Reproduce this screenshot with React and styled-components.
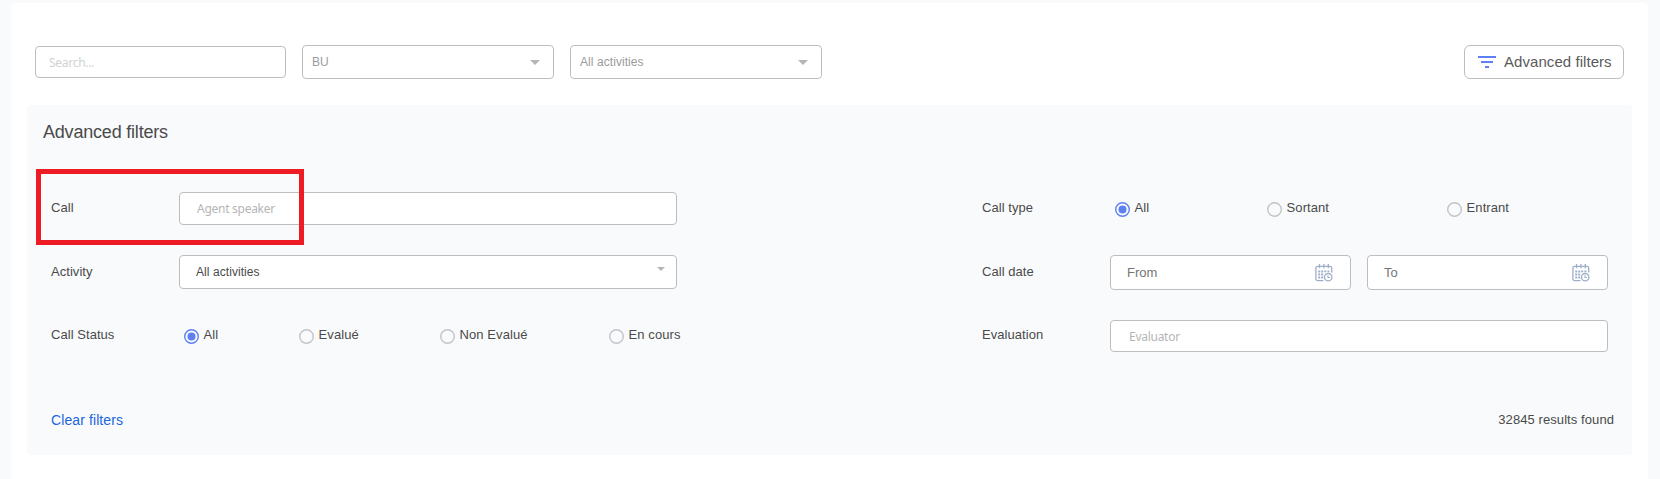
import React from "react";
import styled, { createGlobalStyle, css } from "styled-components";

const GlobalStyle = createGlobalStyle`
  * { box-sizing: border-box; }
  body {
    margin: 0;
    background: #f9fafc;
    font-family: "Liberation Sans", Arial, sans-serif;
    color: #4a4a4a;
    overflow: hidden;
  }
`;

const Page = styled.main`
  height: 479px;
  padding: 3px 12px 0 11px;
`;

const Card = styled.section`
  height: 476px;
  padding: 42px 16px 0;
  background: #fff;
  border-radius: 4px 4px 0 0;
`;

const Toolbar = styled.div`
  display: flex;
  align-items: center;
  gap: 16px;
  height: 34px;
  padding: 0 8px;
`;

const outlined = css`
  background: #fff;
  border: 1px solid #bdbdbd;
  border-radius: 4px;
`;

const TextInput = styled.input`
  ${outlined}
  width: ${(p) => p.$width}px;
  height: ${(p) => p.$height}px;
  margin: ${(p) => p.$offset || 0}px 0 0;
  padding: 0 17px 0 ${(p) => p.$inset}px;
  font: 12px "Noto Sans", "Open Sans", sans-serif;
  letter-spacing: -0.27px;
  outline: none;
  &::placeholder {
    color: ${(p) => p.$tone};
    opacity: 1;
  }
`;

const SelectBox = styled.div`
  ${outlined}
  display: flex;
  align-items: center;
  justify-content: space-between;
  width: ${(p) => p.$width}px;
  height: 34px;
  padding: 0 ${(p) => p.$right}px 0 ${(p) => p.$left}px;
  font-size: 12px;
  letter-spacing: 0.07px;
  color: ${(p) => p.$tone};
`;

const SelectText = styled.span`
  line-height: 16px;
  margin-top: -1px;
`;

const Arrow = styled.span`
  border-style: solid;
  border-color: #b5b5b5 transparent transparent;
  border-width: ${(p) => (p.$small ? "4px 4px 0" : "5px 5px 0")};
  margin-top: ${(p) => (p.$small ? "-6px" : "1px")};
`;

const FilterButton = styled.button`
  ${outlined}
  display: flex;
  align-items: center;
  gap: 9px;
  width: 160px;
  height: 34px;
  margin-left: auto;
  padding: 0 0 0 13px;
  border-radius: 6px;
  font: 15px "Liberation Sans", Arial, sans-serif;
  letter-spacing: 0.06px;
  color: #5a5a5a;
  white-space: nowrap;
`;

const ButtonText = styled.span`
  margin: -1px 0 0 -1px;
`;

const Panel = styled.section`
  height: 350px;
  margin-top: 26px;
  padding: 16px 0 0;
  background: #f9fafc;
  border-radius: 4px;
`;

const Title = styled.h2`
  height: 22px;
  margin: 0 0 33px 16px;
  font-size: 18px;
  line-height: 22px;
  font-weight: 400;
  letter-spacing: -0.2px;
`;

const Filters = styled.div`
  display: grid;
  grid-template-columns: 931px 1fr;
  padding-left: 24px;
`;

const Column = styled.div`
  display: grid;
  grid-template-rows: 64px 64px 62px;
`;

const Row = styled.div`
  display: flex;
  align-items: center;
`;

const Label = styled.span`
  width: 128px;
  font-size: 13px;
  line-height: 16px;
  letter-spacing: 0.05px;
`;

const DateRange = styled.div`
  display: flex;
  gap: 16px;
  margin-top: 1px;
`;

const DateBox = styled.div`
  ${outlined}
  display: flex;
  align-items: center;
  justify-content: space-between;
  width: 241px;
  height: 35px;
  padding: 0 17px 0 16px;
  font-size: 13px;
  color: #757575;
`;

const RadioOption = styled.label`
  display: flex;
  align-items: center;
  gap: 5px;
  width: ${(p) => p.$width}px;
  font-size: 13px;
  line-height: 16px;
  letter-spacing: 0.07px;
  white-space: nowrap;
`;

const RadioGroup = styled.div`
  display: flex;
  padding-left: 4.6px;
`;

const RadioMark = styled.svg`
  flex: none;
  width: 15px;
  height: 15px;
  margin-top: 2px;
  overflow: visible;
`;

const Footer = styled.footer`
  display: flex;
  align-items: center;
  justify-content: space-between;
  height: 20px;
  margin-top: 44px;
  padding: 0 18px 0 24px;
`;

const ClearLink = styled.a`
  font-size: 14px;
  letter-spacing: 0.1px;
  color: #1b66dc;
`;

const ResultCount = styled.span`
  margin-top: -1px;
  font-size: 13px;
  letter-spacing: 0.08px;
`;

const Highlight = styled.div`
  position: absolute;
  left: 36px;
  top: 169px;
  width: 268px;
  height: 76px;
  border: 5px solid #ed1c24;
  pointer-events: none;
`;

const FilterIcon = () => (
  <svg width="18" height="12" viewBox="0 0 18 12" fill="#5f80f3">
    <rect width="18" height="2" />
    <rect x="3" y="5" width="12" height="2" />
    <rect x="7" y="10" width="4" height="2" />
  </svg>
);

const CalendarIcon = () => (
  <svg width="18" height="18" viewBox="0 0 18 18" fill="none" stroke="#9fafc9" strokeWidth="1.3">
    <path d="M8.5 16.6H2.8Q.9 16.6.9 14.7V4Q.9 2.3 2.8 2.3H15Q16.7 2.3 16.7 4V8.5" />
    <path d="M4.5 0V4.2M8.9 0V4.2M13.3 0V4.2" />
    <g fill="#9fafc9" stroke="none">
      <path d="M3.2 6.5h2v2h-2zM6.2 6.5h2v2h-2zM9.2 6.5h2v1.8h-2zM12.4 6.5h2v1.8h-2zM3.2 9.4h2v2h-2zM6.2 9.4h2v2h-2zM3.2 12.4h2v2h-2zM6.2 12.4h2v2h-2z" />
    </g>
    <circle cx="13.2" cy="13.2" r="3.7" />
    <path d="M13 11.2V13.5H15" strokeWidth="1.1" />
  </svg>
);

const Radio = ({ on, width, children }) => (
  <RadioOption $width={width}>
    <RadioMark viewBox="0 0 15 15">
      <circle cx="7.5" cy="7.5" r="6.8" fill="none" stroke={on ? "#5f80f3" : "#c3c4ca"} strokeWidth="1.4" />
      {on && <circle cx="7.5" cy="7.5" r="4" fill="#5f80f3" />}
    </RadioMark>
    {children}
  </RadioOption>
);

const Select = ({ children, width = 252, left = 9, right = 13, tone = "#9b9b9b", small }) => (
  <SelectBox $width={width} $left={left} $right={right} $tone={tone}>
    <SelectText>{children}</SelectText>
    <Arrow $small={small} />
  </SelectBox>
);

export default function App() {
  return (
    <Page>
      <GlobalStyle />
      <Card>
        <Toolbar>
          <TextInput placeholder="Search..." $width={251} $height={32} $inset={13} $tone="#d2d2d2" />
          <Select>BU</Select>
          <Select>All activities</Select>
          <FilterButton>
            <FilterIcon />
            <ButtonText>Advanced filters</ButtonText>
          </FilterButton>
        </Toolbar>
        <Panel>
          <Title>Advanced filters</Title>
          <Filters>
            <Column>
              <Row>
                <Label>Call</Label>
                <TextInput placeholder="Agent speaker" $width={498} $height={33} $offset={1} $inset={17} $tone="#b5b5b5" />
              </Row>
              <Row>
                <Label>Activity</Label>
                <Select width={498} left={16} right={11} tone="#4a4a4a" small>
                  All activities
                </Select>
              </Row>
              <Row>
                <Label>Call Status</Label>
                <RadioGroup>
                  <Radio on width={115}>All</Radio>
                  <Radio width={141}>Evalué</Radio>
                  <Radio width={169}>Non Evalué</Radio>
                  <Radio>En cours</Radio>
                </RadioGroup>
              </Row>
            </Column>
            <Column>
              <Row>
                <Label>Call type</Label>
                <RadioGroup>
                  <Radio on width={152}>All</Radio>
                  <Radio width={180}>Sortant</Radio>
                  <Radio>Entrant</Radio>
                </RadioGroup>
              </Row>
              <Row>
                <Label>Call date</Label>
                <DateRange>
                  <DateBox>From<CalendarIcon /></DateBox>
                  <DateBox>To<CalendarIcon /></DateBox>
                </DateRange>
              </Row>
              <Row>
                <Label>Evaluation</Label>
                <TextInput placeholder="Evaluator" $width={498} $height={32} $offset={2} $inset={18} $tone="#b5b5b5" />
              </Row>
            </Column>
          </Filters>
          <Footer>
            <ClearLink>Clear filters</ClearLink>
            <ResultCount>32845 results found</ResultCount>
          </Footer>
        </Panel>
      </Card>
      <Highlight />
    </Page>
  );
}
